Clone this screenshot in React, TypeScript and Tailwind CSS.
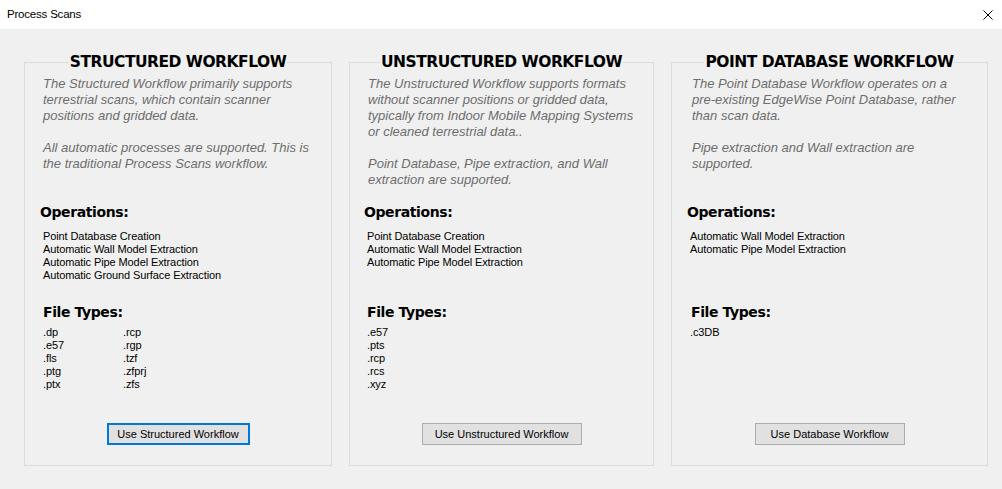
import React from "react";

type Panel = {
  title: string;
  desc: string[];
  ops: string[];
  files: string[][];
  button: string;
  width: string;
  buttonClass: string;
  descPad: string;
  opsHeadPad: string;
  opsPad: string;
  filesHeadPad: string;
  filesPad: string;
};

const PANELS: Panel[] = [
  {
    title: "STRUCTURED WORKFLOW",
    desc: [
      "The Structured Workflow primarily supports",
      "terrestrial scans, which contain scanner",
      "positions and gridded data.",
      "",
      "All automatic processes are supported. This is",
      "the traditional Process Scans workflow.",
    ],
    ops: [
      "Point Database Creation",
      "Automatic Wall Model Extraction",
      "Automatic Pipe Model Extraction",
      "Automatic Ground Surface Extraction",
    ],
    files: [
      [".dp", ".e57", ".fls", ".ptg", ".ptx"],
      [".rcp", ".rgp", ".tzf", ".zfprj", ".zfs"],
    ],
    button: "Use Structured Workflow",
    width: "w-[308px]",
    buttonClass: "w-[143px] border-2 border-[#0078d7]",
    descPad: "pl-[18px]",
    opsHeadPad: "pl-[15px]",
    opsPad: "pl-[18px]",
    filesHeadPad: "pl-[18px]",
    filesPad: "pl-[18px]",
  },
  {
    title: "UNSTRUCTURED WORKFLOW",
    desc: [
      "The Unstructured Workflow supports formats",
      "without scanner positions or gridded data,",
      "typically from Indoor Mobile Mapping Systems",
      "or cleaned terrestrial data..",
      "",
      "Point Database, Pipe extraction, and Wall",
      "extraction are supported.",
    ],
    ops: [
      "Point Database Creation",
      "Automatic Wall Model Extraction",
      "Automatic Pipe Model Extraction",
    ],
    files: [[".e57", ".pts", ".rcp", ".rcs", ".xyz"]],
    button: "Use Unstructured Workflow",
    width: "w-[305px]",
    buttonClass: "w-[160px] border border-[#adadad]",
    descPad: "pl-[18px]",
    opsHeadPad: "pl-[14px]",
    opsPad: "pl-[17px]",
    filesHeadPad: "pl-[17px]",
    filesPad: "pl-[17px]",
  },
  {
    title: "POINT DATABASE WORKFLOW",
    desc: [
      "The Point Database Workflow operates on a",
      "pre-existing EdgeWise Point Database, rather",
      "than scan data.",
      "",
      "Pipe extraction and Wall extraction are",
      "supported.",
    ],
    ops: ["Automatic Wall Model Extraction", "Automatic Pipe Model Extraction"],
    files: [[".c3DB"]],
    button: "Use Database Workflow",
    width: "w-[317px]",
    buttonClass: "w-[150px] border border-[#adadad]",
    descPad: "pl-[20px]",
    opsHeadPad: "pl-[15px]",
    opsPad: "pl-[18px]",
    filesHeadPad: "pl-[19px]",
    filesPad: "pl-[18px]",
  },
];

const heading =
  "h-[18px] leading-[18px] text-[14px] font-bold tracking-[-0.4px] text-black font-['DejaVu_Sans',sans-serif]";
const small = "h-[13px] leading-[13px] text-[11px] tracking-[-0.1px] text-black whitespace-nowrap";

function WorkflowBox({ p }: { p: Panel }) {
  return (
    <fieldset className={`${p.width} border border-[#dcdcdc] flex flex-col`}>
      <legend className="mx-auto px-[1px] h-[22px] leading-[22px] text-[15.5px] font-bold tracking-[-0.5px] text-black font-['DejaVu_Sans',sans-serif]">
        {p.title}
      </legend>

      <div className={`mt-[3px] h-[127px] ${p.descPad} italic text-[13px] text-[#6d6d6d]`}>
        {p.desc.map((line, i) => (
          <div key={i} className="h-4 leading-4 whitespace-nowrap">
            {line}
          </div>
        ))}
      </div>

      <div className={`${heading} ${p.opsHeadPad}`}>Operations:</div>
      <div className={`h-[82px] pt-[9px] ${p.opsPad}`}>
        {p.ops.map((op) => (
          <div key={op} className={small}>
            {op}
          </div>
        ))}
      </div>

      <div className={`${heading} ${p.filesHeadPad}`}>File Types:</div>
      <div className={`h-[102px] pt-[5px] ${p.filesPad} flex`}>
        {p.files.map((col, i) => (
          <div key={i} className="w-[80px]">
            {col.map((f) => (
              <div key={f} className={small}>
                {f}
              </div>
            ))}
          </div>
        ))}
      </div>

      <div className="flex justify-center pb-[20px]">
        <button
          className={`${p.buttonClass} h-[22px] bg-[#e1e1e1] text-[11px] text-black leading-none`}
        >
          {p.button}
        </button>
      </div>
    </fieldset>
  );
}

export default function App() {
  return (
    <div className="w-[1002px] h-[489px] flex flex-col bg-[#f0f0f0] font-['Liberation_Sans',Arial,sans-serif] overflow-hidden">
      <div className="h-[29px] bg-white flex items-center justify-between pl-[7px] pr-[9px]">
        <span className="text-[11.5px] tracking-[-0.2px] text-black">Process Scans</span>
        <svg width="10" height="10" viewBox="0 0 10 10" className="text-black">
          <path d="M0.5 0.5 L9.5 9.5 M9.5 0.5 L0.5 9.5" stroke="currentColor" strokeWidth="1" />
        </svg>
      </div>

      <div className="flex-1 flex items-start gap-[17px] pl-[24px] pt-[22px]">
        {PANELS.map((p) => (
          <WorkflowBox key={p.title} p={p} />
        ))}
      </div>
    </div>
  );
}
